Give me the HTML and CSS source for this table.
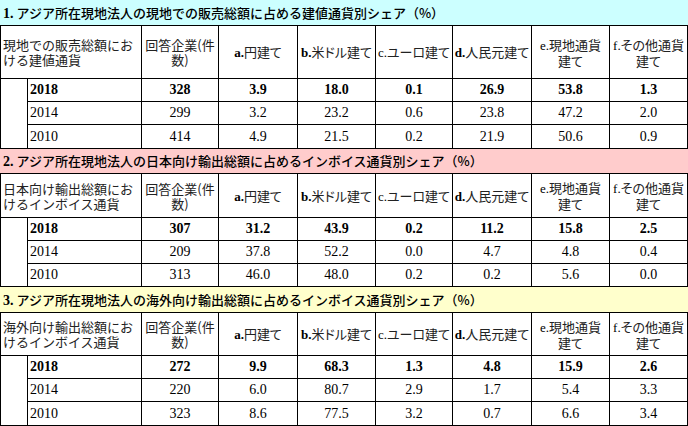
FILE: index.html
```html
<!DOCTYPE html>
<html lang="ja">
<head>
<meta charset="utf-8">
<link rel="stylesheet" href="styles.css">
</head>
<body>
<div class="page">
  <div class="ttl cyan"><b class="num">1.</b> アジア所在現地法人の現地での販売総額に占める建値通貨別シェア（%）</div>
  <table class="tbl">
    <colgroup><col class="w0"><col class="w1"><col class="w2"><col class="w3"><col class="w4"><col class="w5"><col class="w6"><col class="w7"><col class="w8"></colgroup>
    <tr class="hd h53"><th colspan="2" class="lab">現地での販売総額にお<br>ける建値通貨</th><th>回答企業(件<br>数)</th><th class="p"><b class="lt">a.</b>円建て</th><th class="p"><b class="lt">b.</b>米ドル建て</th><th class="p"><span class="lt">c.</span>ユーロ建て</th><th class="p"><b class="lt">d.</b>人民元建て</th><th class="p"><span class="lt">e.</span>現地通貨<br>建て</th><th class="p"><span class="lt">f.</span>その他通貨<br>建て</th></tr>
    <tr class="r23 bold"><td rowspan="3" class="blank"></td><td class="yr">2018</td><td>328</td><td>3.9</td><td>18.0</td><td>0.1</td><td>26.9</td><td>53.8</td><td>1.3</td></tr>
    <tr class="r23"><td class="yr">2014</td><td>299</td><td>3.2</td><td>23.2</td><td>0.6</td><td>23.8</td><td>47.2</td><td>2.0</td></tr>
    <tr class="r24"><td class="yr">2010</td><td>414</td><td>4.9</td><td>21.5</td><td>0.2</td><td>21.9</td><td>50.6</td><td>0.9</td></tr>
  </table>

  <div class="ttl pink t24"><b class="num">2.</b> アジア所在現地法人の日本向け輸出総額に占めるインボイス通貨別シェア（%）</div>
  <table class="tbl">
    <colgroup><col class="w0"><col class="w1"><col class="w2"><col class="w3"><col class="w4"><col class="w5"><col class="w6"><col class="w7"><col class="w8"></colgroup>
    <tr class="hd h44"><th colspan="2" class="lab">日本向け輸出総額にお<br>けるインボイス通貨</th><th>回答企業(件<br>数)</th><th class="p"><b class="lt">a.</b>円建て</th><th class="p"><b class="lt">b.</b>米ドル建て</th><th class="p"><span class="lt">c.</span>ユーロ建て</th><th class="p"><b class="lt">d.</b>人民元建て</th><th class="p"><span class="lt">e.</span>現地通貨<br>建て</th><th class="p"><span class="lt">f.</span>その他通貨<br>建て</th></tr>
    <tr class="r23 bold"><td rowspan="3" class="blank"></td><td class="yr">2018</td><td>307</td><td>31.2</td><td>43.9</td><td>0.2</td><td>11.2</td><td>15.8</td><td>2.5</td></tr>
    <tr class="r23"><td class="yr">2014</td><td>209</td><td>37.8</td><td>52.2</td><td>0.0</td><td>4.7</td><td>4.8</td><td>0.4</td></tr>
    <tr class="r23"><td class="yr">2010</td><td>313</td><td>46.0</td><td>48.0</td><td>0.2</td><td>0.2</td><td>5.6</td><td>0.0</td></tr>
  </table>

  <div class="ttl yellow"><b class="num">3.</b> アジア所在現地法人の海外向け輸出総額に占めるインボイス通貨別シェア（%）</div>
  <table class="tbl">
    <colgroup><col class="w0"><col class="w1"><col class="w2"><col class="w3"><col class="w4"><col class="w5"><col class="w6"><col class="w7"><col class="w8"></colgroup>
    <tr class="hd h43"><th colspan="2" class="lab">海外向け輸出総額にお<br>けるインボイス通貨</th><th>回答企業(件<br>数)</th><th class="p"><b class="lt">a.</b>円建て</th><th class="p"><b class="lt">b.</b>米ドル建て</th><th class="p"><span class="lt">c.</span>ユーロ建て</th><th class="p"><b class="lt">d.</b>人民元建て</th><th class="p"><span class="lt">e.</span>現地通貨<br>建て</th><th class="p"><span class="lt">f.</span>その他通貨<br>建て</th></tr>
    <tr class="r23 bold"><td rowspan="3" class="blank"></td><td class="yr">2018</td><td>272</td><td>9.9</td><td>68.3</td><td>1.3</td><td>4.8</td><td>15.9</td><td>2.6</td></tr>
    <tr class="r23"><td class="yr">2014</td><td>220</td><td>6.0</td><td>80.7</td><td>2.9</td><td>1.7</td><td>5.4</td><td>3.3</td></tr>
    <tr class="r24"><td class="yr">2010</td><td>323</td><td>8.6</td><td>77.5</td><td>3.2</td><td>0.7</td><td>6.6</td><td>3.4</td></tr>
  </table>
</div>
</body>
</html>
```
FILE: styles.css
```css
html, body {
  margin: 0;
  padding: 0;
  background: #fff;
}
.page {
  width: 688px;
  font-family: "Noto Sans CJK JP", sans-serif;
  color: #000;
}
.ttl {
  height: 25px;
  line-height: 25px;
  padding-left: 3px;
  font-size: 13px;
  font-weight: 500;
  white-space: nowrap;
}
.ttl.t24 {
  height: 24px;
  line-height: 24px;
}
.cyan { background: #ccffff; }
.pink { background: #ffcccc; }
.yellow { background: #ffffcc; }
.num {
  font-family: "Liberation Serif", serif;
  font-weight: bold;
  font-size: 14px;
}
.tbl {
  border-collapse: collapse;
  table-layout: fixed;
  width: 687px;
}
.w0 { width: 27px; }
.w1 { width: 114px; }
.w2 { width: 77px; }
.w3 { width: 79px; }
.w4 { width: 78px; }
.w5 { width: 77px; }
.w6 { width: 79px; }
.w7 { width: 78px; }
.w8 { width: 78px; }
.tbl th, .tbl td {
  border: 1px solid #000;
  padding: 0 2px;
  overflow: hidden;
}
.tbl th {
  font-weight: normal;
  font-size: 13px;
  line-height: 15px;
  text-align: center;
  vertical-align: middle;
  color: #222;
  white-space: nowrap;
}
.tbl th.p {
  font-feature-settings: "palt";
  padding: 0;
}
.tbl th.lab {
  text-align: left;
}
.lt {
  font-family: "Liberation Serif", serif;
  font-size: 13px;
  color: #000;
}
.h53 { height: 53px; }
.h44 { height: 44px; }
.h43 { height: 43px; }
.r23 { height: 23px; }
.r24 { height: 24px; }
.tbl td {
  font-family: "Liberation Serif", serif;
  font-size: 14px;
  text-align: center;
  vertical-align: middle;
  line-height: 16px;
}
.tbl td.yr {
  text-align: left;
  padding-left: 2px;
}
.tbl tr.bold td {
  font-weight: bold;
}
.tbl td.blank {
  padding: 0;
}
```
